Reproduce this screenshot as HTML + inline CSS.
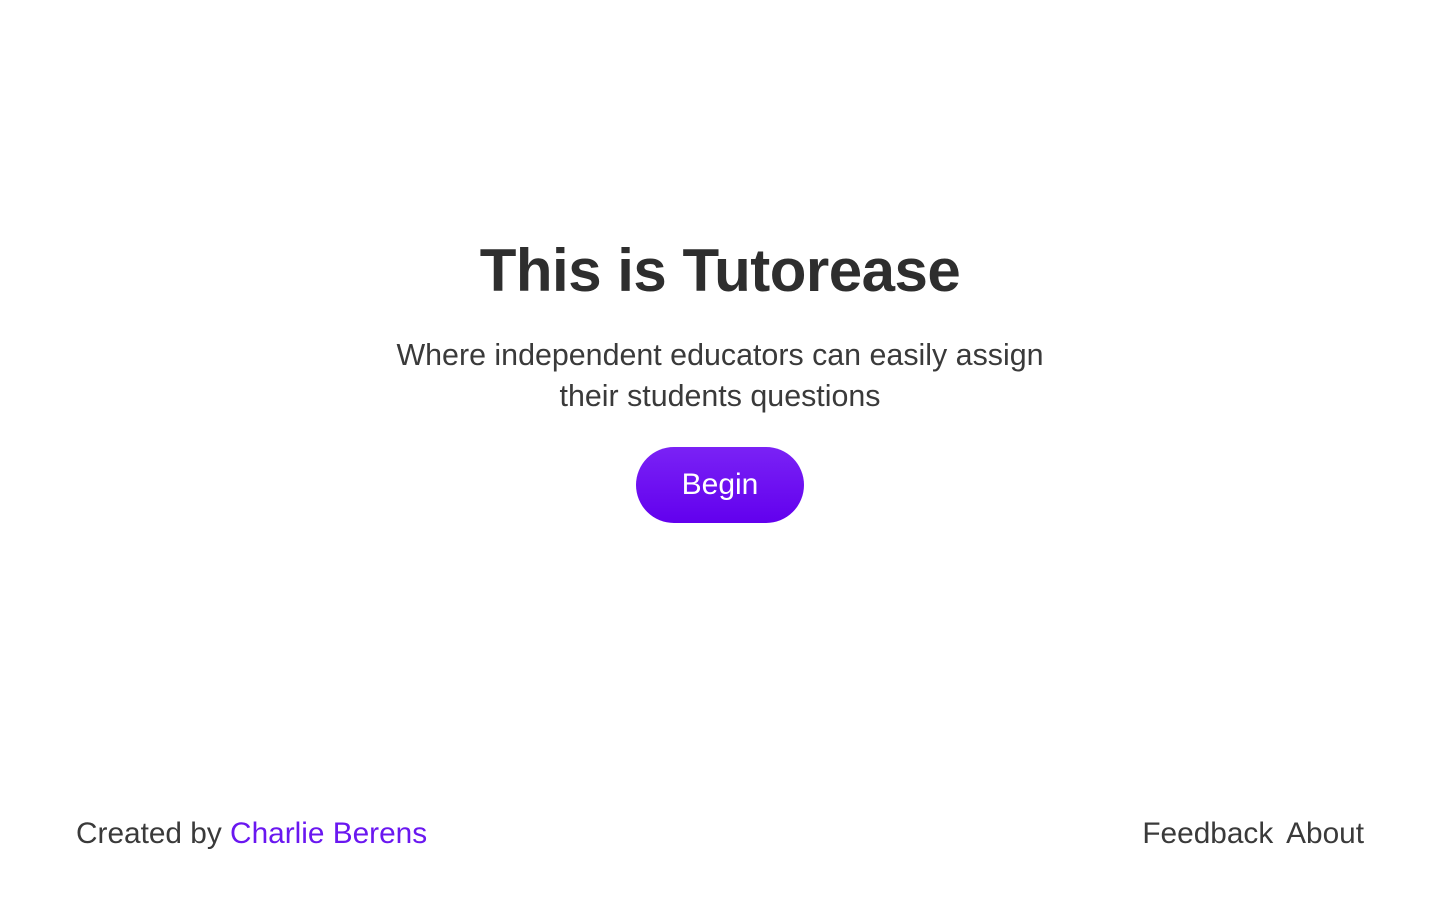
<!DOCTYPE html>
<html><head><meta charset="utf-8"><style>
html,body{margin:0;width:1440px;height:900px;background:#fff;overflow:hidden;font-family:"Liberation Sans",sans-serif;color:#333;}
h1{position:absolute;top:236px;left:0;width:1440px;text-align:center;margin:0;font-size:60px;font-weight:bold;color:#2e2e2e;letter-spacing:-0.5px;line-height:70px;}
.sub{position:absolute;top:335px;left:0;width:1440px;text-align:center;font-size:30.4px;line-height:41px;color:#3a3a3a;}
.btn{position:absolute;left:636px;top:447px;width:168px;height:76px;border-radius:38px;background:linear-gradient(#7a22f5,#6200ee);color:#fff;font-size:30px;text-align:center;line-height:76px;}
.foot{position:absolute;top:814px;font-size:29.8px;line-height:40px;color:#3a3a3a;}
.l{left:76px}.r{right:76px;word-spacing:-1px}
a{color:#6a17f0;text-decoration:none}
</style></head><body>
<h1>This is Tutorease</h1>
<div class="sub">Where independent educators can easily assign<br>their students questions</div>
<div class="btn">Begin</div>
<div class="foot l">Created by <a>Charlie Berens</a></div>
<div class="foot r">Feedback&nbsp; About</div>
</body></html>
